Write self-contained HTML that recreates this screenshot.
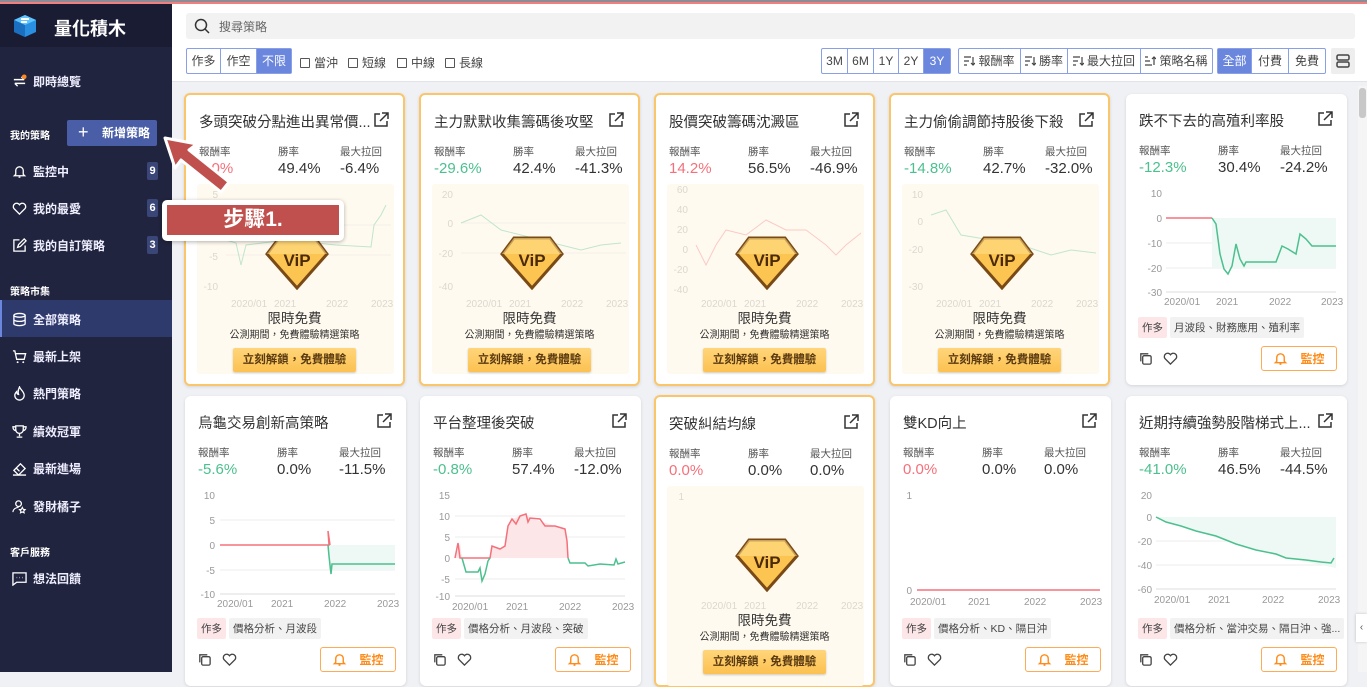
<!DOCTYPE html>
<html><head><meta charset="utf-8">
<style>
*{box-sizing:border-box;margin:0;padding:0}
body{width:1367px;height:672px;overflow:hidden;position:relative;background:#f0f1f5;font-family:"Liberation Sans","Noto Sans CJK TC",sans-serif;color:#333}
.abs{position:absolute}
#topline{left:0;top:0;width:1367px;height:4px;background:linear-gradient(#8a8d96 0 2px,#f08080 2px 4px);z-index:5}
#side{left:0;top:0;width:172px;height:672px;background:#21243f;color:#fff}
#logo{left:0;top:4px;width:172px;height:43px;background:#1a1c33}
.si{position:absolute;left:12px;font-size:12px;font-weight:bold;color:#eef;display:flex;align-items:center;gap:6px}
.si svg{width:15px;height:15px}
.sh{position:absolute;left:10px;font-size:10px;font-weight:bold;color:#fff}
.badge{position:absolute;left:147px;width:11px;height:18px;background:#3a4678;border-radius:2px;font-size:11px;font-weight:bold;color:#fff;text-align:center;line-height:18px}
#head{left:172px;top:4px;width:1195px;height:78px;background:#fff;border-bottom:1px solid #e2e3e8}
.seg{position:absolute;display:flex;border:1px solid #8aa0e6;border-radius:2px;background:#fff;height:26px}
.seg div{padding:0;text-align:center;font-size:12px;line-height:24px;color:#444;border-right:1px solid #8aa0e6;white-space:nowrap;display:flex;align-items:center;justify-content:center;gap:3px}
.seg div:last-child{border-right:none}
.seg .on{background:#6b86dd;color:#fff}
.cb{position:absolute;top:50px;font-size:12px;color:#444;display:flex;align-items:center;gap:4px}
.cb i{display:inline-block;width:10px;height:10px;border:1.5px solid #555;border-radius:1px}
.card{position:absolute;width:221px;background:#fff;border-radius:6px;box-shadow:0 1px 3px rgba(0,0,0,.12)}
.vip{border:2px solid #fbc56a}
.t{position:absolute;left:13px;top:16px;font-size:14.5px;color:#333;white-space:nowrap}
.ext{position:absolute;right:14px;top:17px;width:16px;height:16px}
.lb{position:absolute;top:49px;font-size:10.5px;color:#555}
.vl{position:absolute;top:65px;font-size:15px;color:#333}
.r{color:#f5707a}.g{color:#4cc08f}
.ch{position:absolute;left:10px;top:90px;width:200px;height:125px;overflow:visible}
.ch text{font-size:10px;fill:#999;font-family:"Liberation Sans",sans-serif}
.tags{position:absolute;left:12px;display:flex;gap:3px;font-size:10.5px}
.tags span{padding:3px 4px;background:#f2f2f3;color:#444;border-radius:2px}
.tags span.p{background:#fde6e8}
.foot{position:absolute;left:12px;display:flex;gap:10px}
.bell{position:absolute;right:10px;width:76px;height:25px;border:1px solid #ffaa55;border-radius:3px;color:#ff8c1a;font-size:12px;font-weight:bold;display:flex;align-items:center;justify-content:center;gap:12px}
.cream{position:absolute;left:11px;top:89px;width:197px;height:190px;background:#fffaef;border-radius:3px}
.vipbox{position:absolute;left:0;width:100%;text-align:center}
.btn{display:inline-block;padding:0 10px;height:24px;line-height:24px;background:linear-gradient(#ffd57a,#fcc151);color:#5a3a10;font-size:11.5px;font-weight:bold;border-radius:2px;box-shadow:0 1px 2px rgba(0,0,0,.2)}
</style></head><body>
<div class="abs" id="topline"></div>
<div class="abs" id="side">
 <div class="abs" id="logo">
  <svg class="abs" style="left:12px;top:9px" width="26" height="26" viewBox="0 0 26 26"><path d="M13 2 L24 7 L24 19 L13 24 L2 19 L2 7Z" fill="#2a8fe0"/><path d="M13 2 L24 7 L13 12 L2 7Z" fill="#5ec4ff"/><path d="M13 12 L13 24 L2 19 L2 7Z" fill="#1b6fc0"/><path d="M9 6 h8 M9 9 h6" stroke="#fff" stroke-width="2"/></svg>
  <div class="abs" style="left:54px;top:11px;font-size:18px;font-weight:bold;color:#fff">量化積木</div>
 </div>
 <div class="si" style="top:73px"><svg viewBox="0 0 16 16"><path d="M2 6h11M10 3l3 3M14 10H3M6 13l-3-3" stroke="#fff" stroke-width="1.5" fill="none"/><circle cx="13" cy="3" r="2.5" fill="#ff8a1f"/></svg>即時總覽</div>
 <div class="sh" style="top:127px">我的策略</div>
 <div class="abs" style="left:67px;top:120px;width:90px;height:26px;background:#4a5ea8;border-radius:2px;font-size:12px;font-weight:bold;line-height:26px;color:#fff"><span style="font-size:18px;font-weight:normal;position:absolute;left:11px;top:-1px">+</span><span style="position:absolute;left:35px">新增策略</span></div>
 <div class="si" style="top:163px"><svg viewBox="0 0 16 16"><path d="M4 11V7a4 4 0 0 1 8 0v4l1.5 1.5h-11ZM7 14h2" stroke="#fff" stroke-width="1.4" fill="none"/></svg>監控中</div><div class="badge" style="top:162px">9</div>
 <div class="si" style="top:200px"><svg viewBox="0 0 16 16"><path d="M8 14 2 8a3.3 3.3 0 0 1 6-4 3.3 3.3 0 0 1 6 4Z" stroke="#fff" stroke-width="1.4" fill="none"/></svg>我的最愛</div><div class="badge" style="top:199px">6</div>
 <div class="si" style="top:237px"><svg viewBox="0 0 16 16"><path d="M8 2H2v12h12V8M6 10l1-3 6-6 2 2-6 6Z" stroke="#fff" stroke-width="1.4" fill="none"/></svg>我的自訂策略</div><div class="badge" style="top:236px">3</div>
 <div class="sh" style="top:283px">策略市集</div>
 <div class="abs" style="left:0;top:300px;width:172px;height:37px;background:#2e3a6c;border-left:2px solid #6b86dd"></div>
 <div class="si" style="top:311px"><svg viewBox="0 0 16 16"><ellipse cx="8" cy="3.5" rx="6" ry="2" stroke="#fff" stroke-width="1.4" fill="none"/><path d="M2 3.5v9c0 1.1 2.7 2 6 2s6-.9 6-2v-9M2 8c0 1.1 2.7 2 6 2s6-.9 6-2" stroke="#fff" stroke-width="1.4" fill="none"/></svg>全部策略</div>
 <div class="si" style="top:348px"><svg viewBox="0 0 16 16"><path d="M1 2h2l2 9h8l1.5-6H4" stroke="#fff" stroke-width="1.4" fill="none"/><circle cx="6" cy="14" r="1" fill="#fff"/><circle cx="12" cy="14" r="1" fill="#fff"/></svg>最新上架</div>
 <div class="si" style="top:385px"><svg viewBox="0 0 16 16"><path d="M8 1c1 3 5 5 5 9a5 5 0 0 1-10 0c0-2 1-3 2-4 0 2 1 3 2 3-1-3 0-6 1-8Z" stroke="#fff" stroke-width="1.4" fill="none"/></svg>熱門策略</div>
 <div class="si" style="top:423px"><svg viewBox="0 0 16 16"><path d="M4 2h8v4a4 4 0 0 1-8 0ZM4 3H1c0 3 2 4 3 4M12 3h3c0 3-2 4-3 4M8 10v3M5 14h6" stroke="#fff" stroke-width="1.4" fill="none"/></svg>績效冠軍</div>
 <div class="si" style="top:460px"><svg viewBox="0 0 16 16"><path d="M2 10 9 3l5 5-7 7Z M5 8l3 3M1 15h14" stroke="#fff" stroke-width="1.4" fill="none"/></svg>最新進場</div>
 <div class="si" style="top:498px"><svg viewBox="0 0 16 16"><circle cx="7" cy="5" r="3" stroke="#fff" stroke-width="1.4" fill="none"/><path d="M1 14c0-3 3-5 6-5M11 9l1 2 2 .3-1.5 1.4.4 2-1.9-1-1.9 1 .4-2L8 11.3l2-.3Z" stroke="#fff" stroke-width="1.2" fill="none"/></svg>發財橘子</div>
 <div class="sh" style="top:544px">客戶服務</div>
 <div class="si" style="top:570px"><svg viewBox="0 0 16 16"><path d="M1 2h14v10H5l-4 3Z M5 7h.5M8 7h.5M11 7h.5" stroke="#fff" stroke-width="1.4" fill="none"/></svg>想法回饋</div>
</div>

<div class="abs" id="head">
 <div class="abs" style="left:14px;top:9px;width:1169px;height:26px;background:#f2f2f2;border-radius:3px">
  <svg class="abs" style="left:8px;top:5px" width="16" height="16" viewBox="0 0 16 16"><circle cx="7" cy="7" r="5.5" stroke="#333" stroke-width="1.5" fill="none"/><path d="M11 11l4 4" stroke="#333" stroke-width="1.5"/></svg>
  <span class="abs" style="left:33px;top:5px;font-size:12px;color:#666">搜尋策略</span>
 </div>
 <div class="seg" style="left:14px;top:44px"><div style="width:34px">作多</div><div style="width:36px">作空</div><div class="on" style="width:34px">不限</div></div>
 <div class="cb" style="left:128px"><i></i>當沖</div>
 <div class="cb" style="left:176px"><i></i>短線</div>
 <div class="cb" style="left:225px"><i></i>中線</div>
 <div class="cb" style="left:273px"><i></i>長線</div>
 <div class="seg" style="left:649px;top:44px"><div style="width:26px">3M</div><div style="width:26px">6M</div><div style="width:25px">1Y</div><div style="width:25px">2Y</div><div class="on" style="width:26px">3Y</div></div>
 <div class="seg" style="left:786px;top:44px">
  <div style="width:62px"><svg width="11" height="10" viewBox="0 0 11 10"><path d="M0 1h7M0 5h5M0 9h3M9 1v8M7 7l2 2 2-2" stroke="#444" stroke-width="1.2" fill="none"/></svg>報酬率</div>
  <div style="width:47px"><svg width="11" height="10" viewBox="0 0 11 10"><path d="M0 1h7M0 5h5M0 9h3M9 1v8M7 7l2 2 2-2" stroke="#444" stroke-width="1.2" fill="none"/></svg>勝率</div>
  <div style="width:73px"><svg width="11" height="10" viewBox="0 0 11 10"><path d="M0 1h7M0 5h5M0 9h3M9 1v8M7 7l2 2 2-2" stroke="#444" stroke-width="1.2" fill="none"/></svg>最大拉回</div>
  <div style="width:71px"><svg width="11" height="10" viewBox="0 0 11 10"><path d="M0 9h7M0 5h5M0 1h3M9 9V1M7 3l2-2 2 2" stroke="#444" stroke-width="1.2" fill="none"/></svg>策略名稱</div>
 </div>
 <div class="seg" style="left:1045px;top:44px"><div class="on" style="width:34px">全部</div><div style="width:37px">付費</div><div style="width:36px">免費</div></div>
 <div class="abs" style="left:1159px;top:44px;width:24px;height:26px;background:#eee;border-radius:2px"><svg class="abs" style="left:4px;top:5px" width="16" height="16" viewBox="0 0 16 16"><rect x="2" y="2" width="12" height="5" rx="1.5" stroke="#444" stroke-width="1.5" fill="none"/><rect x="2" y="9" width="12" height="5" rx="1.5" stroke="#444" stroke-width="1.5" fill="none"/></svg></div>
</div>
<div class="abs" style="left:1358px;top:86px;width:9px;height:586px;background:#f5f5f5"><div class="abs" style="left:1px;top:2px;width:7px;height:30px;background:#c8c8c8;border-radius:3px"></div></div>
<div class="abs" style="left:1356px;top:614px;width:11px;height:28px;background:#fff;box-shadow:0 0 3px rgba(0,0,0,.2);font-size:10px;line-height:28px;text-align:center;color:#555">‹</div>

<!-- ROW 1 -->
<div class="card vip" style="left:184px;top:93px;height:293px">
 <div class="t">多頭突破分點進出異常價...</div>
 <svg class="ext" viewBox="0 0 16 16"><path d="M7 2H2v12h12V9M9 1h6v6M15 1 7 9" stroke="#333" stroke-width="1.5" fill="none"/></svg>
 <div class="lb" style="left:13px">報酬率</div><div class="lb" style="left:92px">勝率</div><div class="lb" style="left:154px">最大拉回</div>
 <div class="vl r" style="left:13px">8.0%</div><div class="vl" style="left:92px">49.4%</div><div class="vl" style="left:154px">-6.4%</div>
 <div class="cream"></div>
 <svg class="ch" viewBox="0 0 200 125" style="opacity:.35"><text x="22" y="13" text-anchor="end">5</text><text x="22" y="105" text-anchor="end">-10</text><text x="22" y="75" text-anchor="end">-5</text><line x1="30" y1="40" x2="195" y2="40" stroke="#ddd"/><line x1="30" y1="70" x2="195" y2="70" stroke="#ddd"/><polyline points="30,55 40,58 45,80 50,60 90,55 140,60 175,62 178,40 185,30 190,20" stroke="#4cc08f" fill="none"/><text x="35" y="122">2020/01</text><text x="78" y="122">2021</text><text x="130" y="122">2022</text><text x="175" y="122">2023</text></svg>
 <svg class="abs" style="left:79px;top:141px" width="64" height="54" viewBox="0 0 64 54"><path d="M14 2h36l12 16-30 34L2 18Z" fill="#fcc451" stroke="#7a4a16" stroke-width="3"/><path d="M14 2h36l12 16H2Z" fill="#ffe08a" opacity=".6"/><text x="32" y="30" text-anchor="middle" font-size="17" font-weight="bold" fill="#4a2a08" font-family="Liberation Sans">ViP</text></svg>
 <div class="vipbox" style="top:212px;font-size:13.5px;color:#333">限時免費</div>
 <div class="vipbox" style="top:231px;font-size:10px;color:#333">公測期間，免費體驗精選策略</div>
 <div class="vipbox" style="top:253px"><span class="btn">立刻解鎖，免費體驗</span></div>
</div>

<div class="card vip" style="left:419px;top:93px;height:293px">
 <div class="t">主力默默收集籌碼後攻堅</div>
 <svg class="ext" viewBox="0 0 16 16"><path d="M7 2H2v12h12V9M9 1h6v6M15 1 7 9" stroke="#333" stroke-width="1.5" fill="none"/></svg>
 <div class="lb" style="left:13px">報酬率</div><div class="lb" style="left:92px">勝率</div><div class="lb" style="left:154px">最大拉回</div>
 <div class="vl g" style="left:13px">-29.6%</div><div class="vl" style="left:92px">42.4%</div><div class="vl" style="left:154px">-41.3%</div>
 <div class="cream"></div>
 <svg class="ch" viewBox="0 0 200 125" style="opacity:.35"><text x="22" y="13" text-anchor="end">20</text><text x="22" y="42" text-anchor="end">0</text><text x="22" y="72" text-anchor="end">-20</text><text x="22" y="105" text-anchor="end">-40</text><line x1="30" y1="38" x2="195" y2="38" stroke="#ddd"/><line x1="30" y1="68" x2="195" y2="68" stroke="#ddd"/><polyline points="30,38 50,30 70,45 90,50 110,55 130,60 150,65 170,60 190,58" stroke="#4cc08f" fill="none"/><text x="35" y="122">2020/01</text><text x="78" y="122">2021</text><text x="130" y="122">2022</text><text x="175" y="122">2023</text></svg>
 <svg class="abs" style="left:79px;top:141px" width="64" height="54" viewBox="0 0 64 54"><path d="M14 2h36l12 16-30 34L2 18Z" fill="#fcc451" stroke="#7a4a16" stroke-width="3"/><path d="M14 2h36l12 16H2Z" fill="#ffe08a" opacity=".6"/><text x="32" y="30" text-anchor="middle" font-size="17" font-weight="bold" fill="#4a2a08" font-family="Liberation Sans">ViP</text></svg>
 <div class="vipbox" style="top:212px;font-size:13.5px;color:#333">限時免費</div>
 <div class="vipbox" style="top:231px;font-size:10px;color:#333">公測期間，免費體驗精選策略</div>
 <div class="vipbox" style="top:253px"><span class="btn">立刻解鎖，免費體驗</span></div>
</div>

<div class="card vip" style="left:654px;top:93px;height:293px">
 <div class="t">股價突破籌碼沈澱區</div>
 <svg class="ext" viewBox="0 0 16 16"><path d="M7 2H2v12h12V9M9 1h6v6M15 1 7 9" stroke="#333" stroke-width="1.5" fill="none"/></svg>
 <div class="lb" style="left:13px">報酬率</div><div class="lb" style="left:92px">勝率</div><div class="lb" style="left:154px">最大拉回</div>
 <div class="vl r" style="left:13px">14.2%</div><div class="vl" style="left:92px">56.5%</div><div class="vl" style="left:154px">-46.9%</div>
 <div class="cream"></div>
 <svg class="ch" viewBox="0 0 200 125" style="opacity:.35"><text x="22" y="8" text-anchor="end">60</text><text x="22" y="28" text-anchor="end">40</text><text x="22" y="48" text-anchor="end">20</text><text x="22" y="68" text-anchor="end">0</text><text x="22" y="88" text-anchor="end">-20</text><text x="22" y="108" text-anchor="end">-40</text><polyline points="30,60 40,80 50,60 60,45 80,50 100,35 120,45 140,45 160,60 170,70 180,60 190,52 195,48" stroke="#f5707a" fill="none"/><text x="35" y="122">2020/01</text><text x="78" y="122">2021</text><text x="130" y="122">2022</text><text x="175" y="122">2023</text></svg>
 <svg class="abs" style="left:79px;top:141px" width="64" height="54" viewBox="0 0 64 54"><path d="M14 2h36l12 16-30 34L2 18Z" fill="#fcc451" stroke="#7a4a16" stroke-width="3"/><path d="M14 2h36l12 16H2Z" fill="#ffe08a" opacity=".6"/><text x="32" y="30" text-anchor="middle" font-size="17" font-weight="bold" fill="#4a2a08" font-family="Liberation Sans">ViP</text></svg>
 <div class="vipbox" style="top:212px;font-size:13.5px;color:#333">限時免費</div>
 <div class="vipbox" style="top:231px;font-size:10px;color:#333">公測期間，免費體驗精選策略</div>
 <div class="vipbox" style="top:253px"><span class="btn">立刻解鎖，免費體驗</span></div>
</div>

<div class="card vip" style="left:889px;top:93px;height:293px">
 <div class="t">主力偷偷調節持股後下殺</div>
 <svg class="ext" viewBox="0 0 16 16"><path d="M7 2H2v12h12V9M9 1h6v6M15 1 7 9" stroke="#333" stroke-width="1.5" fill="none"/></svg>
 <div class="lb" style="left:13px">報酬率</div><div class="lb" style="left:92px">勝率</div><div class="lb" style="left:154px">最大拉回</div>
 <div class="vl g" style="left:13px">-14.8%</div><div class="vl" style="left:92px">42.7%</div><div class="vl" style="left:154px">-32.0%</div>
 <div class="cream"></div>
 <svg class="ch" viewBox="0 0 200 125" style="opacity:.35"><text x="22" y="13" text-anchor="end">10</text><text x="22" y="40" text-anchor="end">0</text><text x="22" y="68" text-anchor="end">-20</text><text x="22" y="105" text-anchor="end">-30</text><polyline points="30,30 45,25 60,50 90,55 120,60 150,70 170,65 195,68" stroke="#4cc08f" fill="none"/><text x="35" y="122">2020/01</text><text x="78" y="122">2021</text><text x="130" y="122">2022</text><text x="175" y="122">2023</text></svg>
 <svg class="abs" style="left:79px;top:141px" width="64" height="54" viewBox="0 0 64 54"><path d="M14 2h36l12 16-30 34L2 18Z" fill="#fcc451" stroke="#7a4a16" stroke-width="3"/><path d="M14 2h36l12 16H2Z" fill="#ffe08a" opacity=".6"/><text x="32" y="30" text-anchor="middle" font-size="17" font-weight="bold" fill="#4a2a08" font-family="Liberation Sans">ViP</text></svg>
 <div class="vipbox" style="top:212px;font-size:13.5px;color:#333">限時免費</div>
 <div class="vipbox" style="top:231px;font-size:10px;color:#333">公測期間，免費體驗精選策略</div>
 <div class="vipbox" style="top:253px"><span class="btn">立刻解鎖，免費體驗</span></div>
</div>

<div class="card" style="left:1126px;top:94px;height:291px">
 <div class="t">跌不下去的高殖利率股</div>
 <svg class="ext" viewBox="0 0 16 16"><path d="M7 2H2v12h12V9M9 1h6v6M15 1 7 9" stroke="#333" stroke-width="1.5" fill="none"/></svg>
 <div class="lb" style="left:13px">報酬率</div><div class="lb" style="left:92px">勝率</div><div class="lb" style="left:154px">最大拉回</div>
 <div class="vl g" style="left:13px">-12.3%</div><div class="vl" style="left:92px">30.4%</div><div class="vl" style="left:154px">-24.2%</div>
 <svg class="ch" viewBox="0 0 200 125"><text x="26" y="13" text-anchor="end">10</text><text x="26" y="38" text-anchor="end">0</text><text x="26" y="63" text-anchor="end">-10</text><text x="26" y="88" text-anchor="end">-20</text><text x="26" y="112" text-anchor="end">-30</text><line x1="30" y1="59" x2="200" y2="59" stroke="#eee"/><line x1="30" y1="84" x2="200" y2="84" stroke="#eee"/><line x1="30" y1="108" x2="200" y2="108" stroke="#ddd"/><rect x="76" y="34" width="124" height="50" fill="#eef8f4"/><polyline points="30,34 76,34" stroke="#f5707a" stroke-width="1.5" fill="none"/><polyline points="76,34 80,40 84,70 88,85 92,90 96,82 100,60 104,75 108,82 110,78 140,78 146,62 152,65 160,70 164,50 170,55 176,62 200,62" stroke="#4cc08f" stroke-width="1.5" fill="none"/><text x="28" y="121">2020/01</text><text x="80" y="121">2021</text><text x="133" y="121">2022</text><text x="185" y="121">2023</text></svg>
 <div class="tags" style="top:223px"><span class="p">作多</span><span>月波段、財務應用、殖利率</span></div>
 <div class="foot" style="top:257px"><svg width="15" height="15" viewBox="0 0 16 16"><rect x="5" y="5" width="9" height="9" rx="1.5" stroke="#444" stroke-width="1.4" fill="none"/><path d="M3 11V3h8" stroke="#444" stroke-width="1.4" fill="none"/></svg><svg width="15" height="15" viewBox="0 0 16 16"><path d="M8 14 2 8a3.3 3.3 0 0 1 6-4 3.3 3.3 0 0 1 6 4Z" stroke="#444" stroke-width="1.4" fill="none"/></svg></div>
 <div class="bell" style="top:252px"><svg width="15" height="15" viewBox="0 0 16 16"><path d="M4 11V7a4 4 0 0 1 8 0v4l1.5 1.5h-11ZM7 14h2" stroke="#ff8c1a" stroke-width="1.5" fill="none"/></svg>監控</div>
</div>

<!-- ROW 2 -->
<div class="card" style="left:185px;top:396px;height:290px">
 <div class="t">烏龜交易創新高策略</div>
 <svg class="ext" viewBox="0 0 16 16"><path d="M7 2H2v12h12V9M9 1h6v6M15 1 7 9" stroke="#333" stroke-width="1.5" fill="none"/></svg>
 <div class="lb" style="left:13px">報酬率</div><div class="lb" style="left:92px">勝率</div><div class="lb" style="left:154px">最大拉回</div>
 <div class="vl g" style="left:13px">-5.6%</div><div class="vl" style="left:92px">0.0%</div><div class="vl" style="left:154px">-11.5%</div>
 <svg class="ch" viewBox="0 0 200 125"><text x="20" y="13" text-anchor="end">10</text><text x="20" y="38" text-anchor="end">5</text><text x="20" y="63" text-anchor="end">0</text><text x="20" y="88" text-anchor="end">-5</text><text x="20" y="112" text-anchor="end">-10</text><line x1="25" y1="34" x2="200" y2="34" stroke="#eee"/><line x1="25" y1="84" x2="200" y2="84" stroke="#eee"/><line x1="25" y1="108" x2="200" y2="108" stroke="#ddd"/><rect x="134" y="59" width="66" height="25" fill="#eef8f4"/><polyline points="25,59 134,59 133,45 135,59" stroke="#f5707a" stroke-width="1.5" fill="none"/><polyline points="133,59 134,70 136,88 137,78 200,78" stroke="#4cc08f" stroke-width="1.5" fill="none"/><text x="22" y="121">2020/01</text><text x="76" y="121">2021</text><text x="129" y="121">2022</text><text x="182" y="121">2023</text></svg>
 <div class="tags" style="top:222px"><span class="p">作多</span><span>價格分析、月波段</span></div>
 <div class="foot" style="top:256px"><svg width="15" height="15" viewBox="0 0 16 16"><rect x="5" y="5" width="9" height="9" rx="1.5" stroke="#444" stroke-width="1.4" fill="none"/><path d="M3 11V3h8" stroke="#444" stroke-width="1.4" fill="none"/></svg><svg width="15" height="15" viewBox="0 0 16 16"><path d="M8 14 2 8a3.3 3.3 0 0 1 6-4 3.3 3.3 0 0 1 6 4Z" stroke="#444" stroke-width="1.4" fill="none"/></svg></div>
 <div class="bell" style="top:251px"><svg width="15" height="15" viewBox="0 0 16 16"><path d="M4 11V7a4 4 0 0 1 8 0v4l1.5 1.5h-11ZM7 14h2" stroke="#ff8c1a" stroke-width="1.5" fill="none"/></svg>監控</div>
</div>

<div class="card" style="left:420px;top:396px;height:290px">
 <div class="t">平台整理後突破</div>
 <svg class="ext" viewBox="0 0 16 16"><path d="M7 2H2v12h12V9M9 1h6v6M15 1 7 9" stroke="#333" stroke-width="1.5" fill="none"/></svg>
 <div class="lb" style="left:13px">報酬率</div><div class="lb" style="left:92px">勝率</div><div class="lb" style="left:154px">最大拉回</div>
 <div class="vl g" style="left:13px">-0.8%</div><div class="vl" style="left:92px">57.4%</div><div class="vl" style="left:154px">-12.0%</div>
 <svg class="ch" viewBox="0 0 200 125"><text x="20" y="13" text-anchor="end">15</text><text x="20" y="34" text-anchor="end">10</text><text x="20" y="55" text-anchor="end">5</text><text x="20" y="76" text-anchor="end">0</text><text x="20" y="97" text-anchor="end">-5</text><text x="20" y="114" text-anchor="end">-10</text><line x1="25" y1="30" x2="195" y2="30" stroke="#eee"/><line x1="25" y1="51" x2="195" y2="51" stroke="#eee"/><line x1="25" y1="93" x2="195" y2="93" stroke="#eee"/><line x1="25" y1="110" x2="195" y2="110" stroke="#ddd"/><polygon points="25,72 30,57 32,72 60,72 62,60 70,63 75,60 78,40 82,33 90,30 96,28 100,32 125,40 135,43 138,72" fill="#fde6e8"/><polyline points="25,72 28,57 30,72 32,72 60,72 62,60 70,63 75,60 78,40 82,33 86,38 90,30 96,28 98,36 100,32 110,33 115,40 125,40 135,43 137,55 138,72" stroke="#f5707a" stroke-width="1.5" fill="none"/><polyline points="32,72 36,86 48,86 50,82 52,95 55,88 58,75 60,72" stroke="#4cc08f" stroke-width="1.5" fill="none"/><polyline points="138,72 140,77 155,77 158,80 170,78 184,79 186,73 188,78 195,76" stroke="#4cc08f" stroke-width="1.5" fill="none"/><text x="22" y="124">2020/01</text><text x="76" y="124">2021</text><text x="129" y="124">2022</text><text x="182" y="124">2023</text></svg>
 <div class="tags" style="top:222px"><span class="p">作多</span><span>價格分析、月波段、突破</span></div>
 <div class="foot" style="top:256px"><svg width="15" height="15" viewBox="0 0 16 16"><rect x="5" y="5" width="9" height="9" rx="1.5" stroke="#444" stroke-width="1.4" fill="none"/><path d="M3 11V3h8" stroke="#444" stroke-width="1.4" fill="none"/></svg><svg width="15" height="15" viewBox="0 0 16 16"><path d="M8 14 2 8a3.3 3.3 0 0 1 6-4 3.3 3.3 0 0 1 6 4Z" stroke="#444" stroke-width="1.4" fill="none"/></svg></div>
 <div class="bell" style="top:251px"><svg width="15" height="15" viewBox="0 0 16 16"><path d="M4 11V7a4 4 0 0 1 8 0v4l1.5 1.5h-11ZM7 14h2" stroke="#ff8c1a" stroke-width="1.5" fill="none"/></svg>監控</div>
</div>

<div class="card vip" style="left:654px;top:395px;height:292px">
 <div class="t">突破糾結均線</div>
 <svg class="ext" viewBox="0 0 16 16"><path d="M7 2H2v12h12V9M9 1h6v6M15 1 7 9" stroke="#333" stroke-width="1.5" fill="none"/></svg>
 <div class="lb" style="left:13px">報酬率</div><div class="lb" style="left:92px">勝率</div><div class="lb" style="left:154px">最大拉回</div>
 <div class="vl r" style="left:13px">0.0%</div><div class="vl" style="left:92px">0.0%</div><div class="vl" style="left:154px">0.0%</div>
 <div class="cream" style="height:200px"></div>
 <svg class="ch" viewBox="0 0 200 125" style="opacity:.35"><text x="18" y="13" text-anchor="end">1</text><text x="35" y="122">2020/01</text><text x="78" y="122">2021</text><text x="130" y="122">2022</text><text x="175" y="122">2023</text></svg>
 <svg class="abs" style="left:79px;top:141px" width="64" height="54" viewBox="0 0 64 54"><path d="M14 2h36l12 16-30 34L2 18Z" fill="#fcc451" stroke="#7a4a16" stroke-width="3"/><path d="M14 2h36l12 16H2Z" fill="#ffe08a" opacity=".6"/><text x="32" y="30" text-anchor="middle" font-size="17" font-weight="bold" fill="#4a2a08" font-family="Liberation Sans">ViP</text></svg>
 <div class="vipbox" style="top:212px;font-size:13.5px;color:#333">限時免費</div>
 <div class="vipbox" style="top:231px;font-size:10px;color:#333">公測期間，免費體驗精選策略</div>
 <div class="vipbox" style="top:253px"><span class="btn">立刻解鎖，免費體驗</span></div>
</div>

<div class="card" style="left:890px;top:396px;height:290px">
 <div class="t">雙KD向上</div>
 <svg class="ext" viewBox="0 0 16 16"><path d="M7 2H2v12h12V9M9 1h6v6M15 1 7 9" stroke="#333" stroke-width="1.5" fill="none"/></svg>
 <div class="lb" style="left:13px">報酬率</div><div class="lb" style="left:92px">勝率</div><div class="lb" style="left:154px">最大拉回</div>
 <div class="vl r" style="left:13px">0.0%</div><div class="vl" style="left:92px">0.0%</div><div class="vl" style="left:154px">0.0%</div>
 <svg class="ch" viewBox="0 0 200 125"><text x="12" y="13" text-anchor="end">1</text><text x="12" y="108" text-anchor="end">0</text><line x1="17" y1="104" x2="200" y2="104" stroke="#f5707a" stroke-width="1.5"/><text x="10" y="119">2020/01</text><text x="68" y="119">2021</text><text x="124" y="119">2022</text><text x="180" y="119">2023</text></svg>
 <div class="tags" style="top:222px"><span class="p">作多</span><span>價格分析、KD、隔日沖</span></div>
 <div class="foot" style="top:256px"><svg width="15" height="15" viewBox="0 0 16 16"><rect x="5" y="5" width="9" height="9" rx="1.5" stroke="#444" stroke-width="1.4" fill="none"/><path d="M3 11V3h8" stroke="#444" stroke-width="1.4" fill="none"/></svg><svg width="15" height="15" viewBox="0 0 16 16"><path d="M8 14 2 8a3.3 3.3 0 0 1 6-4 3.3 3.3 0 0 1 6 4Z" stroke="#444" stroke-width="1.4" fill="none"/></svg></div>
 <div class="bell" style="top:251px"><svg width="15" height="15" viewBox="0 0 16 16"><path d="M4 11V7a4 4 0 0 1 8 0v4l1.5 1.5h-11ZM7 14h2" stroke="#ff8c1a" stroke-width="1.5" fill="none"/></svg>監控</div>
</div>

<div class="card" style="left:1126px;top:396px;height:290px">
 <div class="t">近期持續強勢股階梯式上...</div>
 <svg class="ext" viewBox="0 0 16 16"><path d="M7 2H2v12h12V9M9 1h6v6M15 1 7 9" stroke="#333" stroke-width="1.5" fill="none"/></svg>
 <div class="lb" style="left:13px">報酬率</div><div class="lb" style="left:92px">勝率</div><div class="lb" style="left:154px">最大拉回</div>
 <div class="vl g" style="left:13px">-41.0%</div><div class="vl" style="left:92px">46.5%</div><div class="vl" style="left:154px">-44.5%</div>
 <svg class="ch" viewBox="0 0 200 125"><text x="16" y="13" text-anchor="end">20</text><text x="16" y="35" text-anchor="end">0</text><text x="16" y="59" text-anchor="end">-20</text><text x="16" y="83" text-anchor="end">-40</text><text x="16" y="107" text-anchor="end">-60</text><line x1="20" y1="55" x2="200" y2="55" stroke="#eee"/><line x1="20" y1="79" x2="200" y2="79" stroke="#eee"/><line x1="20" y1="103" x2="200" y2="103" stroke="#ddd"/><polygon points="20,31 200,31 200,82 150,72 100,58 60,45 30,36" fill="#eef8f4"/><polyline points="20,31 30,36 45,40 60,45 80,50 100,58 120,64 140,68 150,72 170,74 185,76 195,77 198,72" stroke="#4cc08f" stroke-width="1.5" fill="none"/><text x="18" y="117">2020/01</text><text x="72" y="117">2021</text><text x="126" y="117">2022</text><text x="182" y="117">2023</text></svg>
 <div class="tags" style="top:222px"><span class="p">作多</span><span>價格分析、當沖交易、隔日沖、強...</span></div>
 <div class="foot" style="top:256px"><svg width="15" height="15" viewBox="0 0 16 16"><rect x="5" y="5" width="9" height="9" rx="1.5" stroke="#444" stroke-width="1.4" fill="none"/><path d="M3 11V3h8" stroke="#444" stroke-width="1.4" fill="none"/></svg><svg width="15" height="15" viewBox="0 0 16 16"><path d="M8 14 2 8a3.3 3.3 0 0 1 6-4 3.3 3.3 0 0 1 6 4Z" stroke="#444" stroke-width="1.4" fill="none"/></svg></div>
 <div class="bell" style="top:251px"><svg width="15" height="15" viewBox="0 0 16 16"><path d="M4 11V7a4 4 0 0 1 8 0v4l1.5 1.5h-11ZM7 14h2" stroke="#ff8c1a" stroke-width="1.5" fill="none"/></svg>監控</div>
</div>

<!-- annotation -->
<svg class="abs" style="left:155px;top:130px;z-index:10" width="90" height="70" viewBox="0 0 90 70"><path d="M10 8 L42 14 L34 20 L74 52 L66 62 L26 30 L20 38 Z" fill="#c0504d" stroke="#fff" stroke-width="3" stroke-linejoin="round"/></svg>
<div class="abs" style="left:162px;top:200px;width:182px;height:41px;background:#fff;border-radius:5px;box-shadow:0 1px 4px rgba(0,0,0,.3);z-index:10"><div class="abs" style="left:5px;top:5px;width:172px;height:30px;background:#c0504d;color:#fff;font-size:21px;font-weight:bold;text-align:center;line-height:30px">步驟1.</div></div>
</body></html>
